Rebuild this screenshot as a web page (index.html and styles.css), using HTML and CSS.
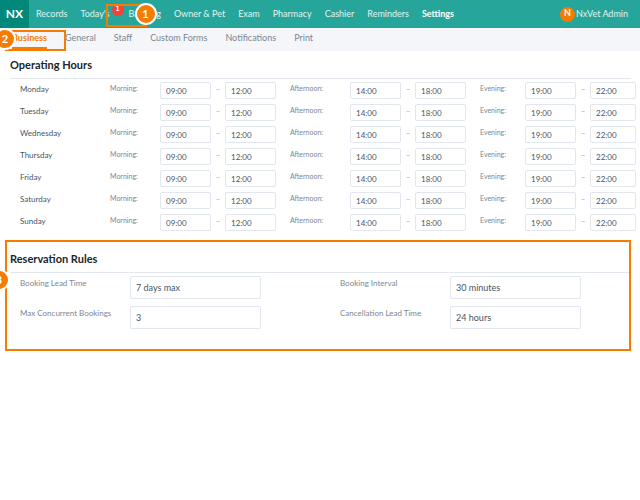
FILE: index.html
```html
<!DOCTYPE html>
<html lang="en">
<head>
  <meta charset="UTF-8" />
  <meta name="viewport" content="width=device-width, initial-scale=1" />
  <title>NxVet - Business Settings</title>
  <link rel="stylesheet" href="styles.css">
</head>
<body>

<header class="topbar">
  <a href="#" class="logo">NX</a>
  <nav class="main-nav">
    <a href="#">Records</a>
    <a href="#" class="today">Today's<span class="count">1</span></a>
    <a href="#">Booking<span class="highlight"><span class="step">1</span></span></a>
    <a href="#">Owner &amp; Pet</a>
    <a href="#">Exam</a>
    <a href="#">Pharmacy</a>
    <a href="#">Cashier</a>
    <a href="#">Reminders</a>
    <a href="#" class="active">Settings</a>
  </nav>
  <div class="user"><span class="avatar">N</span>NxVet Admin</div>
</header>

<nav class="sub-nav">
  <a href="#" class="active">Business<span class="highlight"><span class="step">2</span></span></a>
  <a href="#">General</a>
  <a href="#">Staff</a>
  <a href="#">Custom Forms</a>
  <a href="#">Notifications</a>
  <a href="#">Print</a>
</nav>

<main>
  <section class="hours">
    <h2>Operating Hours</h2>
    <div class="hours-list" id="hoursList"></div>
  </section>

  <section class="rules">
    <span class="step">3</span>
    <h2>Reservation Rules</h2>
    <div class="rules-grid">
      <label for="leadTime">Booking Lead Time</label>
      <input type="text" id="leadTime" value="7 days max" />
      <label for="interval">Booking Interval</label>
      <input type="text" id="interval" value="30 minutes" />
      <label for="maxBookings">Max Concurrent Bookings</label>
      <input type="text" id="maxBookings" value="3" />
      <label for="cancelTime">Cancellation Lead Time</label>
      <input type="text" id="cancelTime" value="24 hours" />
    </div>
  </section>
</main>

<script>
  const days = ['Monday', 'Tuesday', 'Wednesday', 'Thursday', 'Friday', 'Saturday', 'Sunday'];
  const periods = [
    { name: 'Morning', from: '09:00', to: '12:00' },
    { name: 'Afternoon', from: '14:00', to: '18:00' },
    { name: 'Evening', from: '19:00', to: '22:00' }
  ];
  const hoursList = document.getElementById('hoursList');

  days.forEach(day => {
    const row = document.createElement('div');
    row.className = 'hours-row';
    row.innerHTML = `<span class="day">${day}</span>` + periods.map(p => {
      const id = day + p.name;
      return `<label for="${id}">${p.name}:</label>
        <input type="text" id="${id}" value="${p.from}" />
        <span class="dash">–</span>
        <input type="text" aria-label="${day} ${p.name} end" value="${p.to}" />`;
    }).join('');
    hoursList.appendChild(row);
  });
</script>

</body>
</html>
```
FILE: styles.css
```css
* {
  box-sizing: border-box;
}

body {
  margin: 0;
  background: #fff;
  color: #4a5562;
  font-family: Lato, sans-serif;
  font-size: 9px;
  line-height: 12px;
}

a {
  color: inherit;
  text-decoration: none;
}

/* Top bar */
.topbar {
  display: flex;
  align-items: center;
  height: 28px;
  padding-right: 12px;
  background: #26a69a;
  color: #e0f2f1;
}

.logo {
  width: 29px;
  line-height: 28px;
  background: #00897b;
  color: #fff;
  font-size: 12px;
  font-weight: bold;
  text-align: center;
}

.main-nav {
  display: flex;
  gap: 13px;
  margin-left: 7px;
  white-space: nowrap;
}

.main-nav a,
.sub-nav a {
  position: relative;
}

.main-nav .active {
  color: #fff;
  font-weight: bold;
}

.main-nav .today {
  margin-right: 6px;
}

.count {
  position: absolute;
  top: -4px;
  right: -14px;
  width: 12px;
  height: 12px;
  border-radius: 50%;
  background: #f44336;
  color: #fff;
  font-size: 7px;
  font-weight: bold;
  line-height: 9px;
  text-align: center;
}

.user {
  display: flex;
  align-items: center;
  margin-left: auto;
  white-space: nowrap;
}

.avatar {
  width: 15px;
  height: 15px;
  margin-right: 1px;
  border-radius: 50%;
  background: #f57c00;
  color: #fff;
  font-weight: bold;
  line-height: 12px;
  text-align: center;
}

/* Sub navigation */
.sub-nav {
  display: flex;
  gap: 18px;
  height: 23px;
  padding: 4px 12px 0;
  background: #f5f6fa;
  color: #7a8794;
}

.sub-nav a {
  height: 17px;
}

.sub-nav .active {
  border-bottom: 2px solid #f57c00;
  color: #f57c00;
  font-weight: bold;
}

/* Numbered callouts */
.highlight {
  position: absolute;
  border: 2px solid #f57c00;
}

.main-nav .highlight {
  top: -4px;
  left: -23px;
  width: 41px;
  height: 23px;
}

.sub-nav .highlight {
  top: -2px;
  left: -7px;
  width: 61px;
  height: 21px;
}

.step {
  position: absolute;
  z-index: 1;
  width: 22px;
  height: 22px;
  border: 2px solid #fff;
  border-radius: 50%;
  background: #f57c00;
  color: #fff;
  font-size: 11px;
  font-weight: bold;
  line-height: 18px;
  text-align: center;
}

.main-nav .step {
  top: -3px;
  right: -12px;
}

.sub-nav .step {
  top: -4px;
  left: -13px;
}

.rules .step {
  top: 27px;
  left: -19px;
}

/* Sections */
h2 {
  margin: 0;
  padding-bottom: 5px;
  border-bottom: 1px solid #e2e6ee;
  color: #212529;
  font-size: 11px;
  line-height: 16px;
}

label {
  color: #7a8794;
  font-size: 8px;
}

input {
  width: 100%;
  min-width: 0;
  padding: 0 5px;
  border: 1px solid #e2e6ee;
  border-radius: 2px;
  background: #fff;
  color: #4a5562;
  font-family: inherit;
  font-size: 9px;
}

.hours {
  padding: 6px 4px 0 10px;
}

.hours h2 {
  margin-right: 5px;
}

.hours-list {
  display: grid;
  gap: 5px;
  padding: 3px 0 0 10px;
}

.hours-row {
  display: grid;
  grid-template-columns: 90fr 50fr 51fr 14fr 51fr 74fr 51fr 14fr 51fr 59fr 51fr 14fr 46fr;
}

.hours-row input {
  height: 17px;
  font-size: 8px;
}

.hours-row label {
  font-size: 7px;
}

.hours-row input ~ label {
  padding-left: 14px;
}

.day {
  padding-top: 1px;
  font-size: 8px;
}

.dash {
  color: #9aa5b1;
  font-size: 8px;
  line-height: 15px;
  text-align: center;
}

.rules {
  position: relative;
  margin: 9px 9px 0 5px;
  padding: 9px 0 20px 3px;
  border: 2px solid #f57c00;
}

.rules-grid {
  display: grid;
  grid-template-columns: 110fr 131fr 79fr 110fr 131fr 48fr;
  row-gap: 7px;
  padding: 3px 0 0 10px;
}

.rules-grid input {
  height: 23px;
}

.rules-grid label {
  padding-top: 1px;
}

.rules-grid label:nth-of-type(odd) {
  grid-column: 1;
}

.rules-grid label:nth-of-type(even) {
  grid-column: 4;
}
```
